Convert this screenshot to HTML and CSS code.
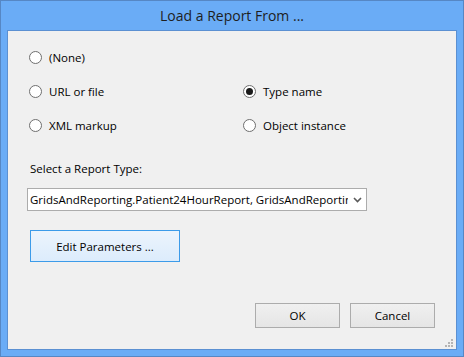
FILE: index.html
```html
<!DOCTYPE html>
<html lang="en">
<head>
<meta charset="UTF-8">
<title>Load a Report From ...</title>
<link rel="stylesheet" href="styles.css">
</head>
<body>

<div class="window">
    <div class="titlebar">Load a Report From ...</div>
    <form class="client" action="#" onsubmit="return false">
        <div class="options">
            <label class="option"><input type="radio" name="source" value="none"> (None)</label>
            <span></span>
            <label class="option"><input type="radio" name="source" value="url"> URL or file</label>
            <label class="option"><input type="radio" name="source" value="type" checked> Type name</label>
            <label class="option"><input type="radio" name="source" value="xml"> XML markup</label>
            <label class="option"><input type="radio" name="source" value="object"> Object instance</label>
        </div>

        <label class="type-label" for="reportType">Select a Report Type:</label>
        <div class="select-wrap">
            <select id="reportType" class="select">
                <option>GridsAndReporting.Patient24HourReport, GridsAndReporting</option>
            </select>
            <svg class="chevron" width="9" height="6" viewBox="0 0 9 6">
                <path d="M1 1 L4.5 4.5 L8 1" fill="none" stroke="#5a5a5a" stroke-width="1.6"/>
            </svg>
        </div>

        <button type="button" class="btn btn-focus">Edit Parameters ...</button>

        <div class="footer">
            <button type="submit" class="btn btn-small">OK</button>
            <button type="button" class="btn btn-small">Cancel</button>
        </div>

        <svg class="grip" width="8" height="8" viewBox="0 0 8 8">
            <rect x="6" y="0" width="2" height="2" fill="#b4b4b4"/>
            <rect x="3" y="3" width="2" height="2" fill="#b4b4b4"/>
            <rect x="6" y="3" width="2" height="2" fill="#b4b4b4"/>
            <rect x="0" y="6" width="2" height="2" fill="#b4b4b4"/>
            <rect x="3" y="6" width="2" height="2" fill="#b4b4b4"/>
            <rect x="6" y="6" width="2" height="2" fill="#b4b4b4"/>
        </svg>
    </form>
</div>

</body>
</html>
```

FILE: styles.css
```css
/* Dialog window */
body {
    margin: 0;
    font-family: "Open Sans", "Noto Sans", sans-serif;
    font-size: 11.5px;
    color: #000;
}

.window {
    width: 464px;
    height: 357px;
    box-sizing: border-box;
    display: flex;
    flex-direction: column;
    background-color: #6aacf6;
    border: 1px solid #5687c4;
}

.titlebar {
    height: 29px;
    line-height: 30px;
    text-align: center;
    font-size: 14px;
    color: #1e1e1e;
}

.client {
    position: relative;
    flex: 1;
    display: flex;
    flex-direction: column;
    margin: 0 6px 6px 6px;
    padding: 16px 21px 21px 19px;
    background-color: #f0f0f0;
    border: 1px solid #5b90d2;
}

.options {
    display: grid;
    grid-template-columns: 214px 1fr;
    row-gap: 14px;
    padding-left: 2px;
}

.option {
    display: flex;
    align-items: center;
    gap: 7px;
    height: 20px;
}

.option input {
    appearance: none;
    margin: 0;
    width: 13px;
    height: 13px;
    border: 1px solid #6f6f6f;
    border-radius: 50%;
    background-color: #fff;
    box-sizing: border-box;
    display: flex;
    align-items: center;
    justify-content: center;
}

.option input:checked::after {
    content: "";
    width: 7px;
    height: 7px;
    border-radius: 50%;
    background-color: #1a1a1a;
}

.type-label {
    margin-top: 26px;
    padding-left: 3px;
    line-height: 16px;
}

.select-wrap {
    position: relative;
    margin-top: 11px;
    width: 340px;
}

.select {
    appearance: none;
    width: 100%;
    height: 23px;
    margin: 0;
    padding: 0 18px 0 2px;
    border: 1px solid #acacac;
    border-radius: 0;
    background-color: #fff;
    font-family: inherit;
    font-size: 11.5px;
    color: #000;
}

.chevron {
    position: absolute;
    right: 5px;
    top: 9px;
}

.btn {
    font-family: inherit;
    font-size: 11.5px;
    color: #000;
    border: 1px solid #acacac;
    background: linear-gradient(#f0f0f0, #e5e5e5);
    padding: 0;
}

.btn-focus {
    margin-top: 19px;
    margin-left: 3px;
    width: 150px;
    height: 32px;
    border-color: #3c9be9;
    background: linear-gradient(#ecf4fc, #dcecfc);
}

.footer {
    margin-top: auto;
    display: flex;
    justify-content: flex-end;
    gap: 10px;
}

.btn-small {
    width: 85px;
    height: 25px;
}

.grip {
    position: absolute;
    right: 3px;
    bottom: 2px;
}
```
